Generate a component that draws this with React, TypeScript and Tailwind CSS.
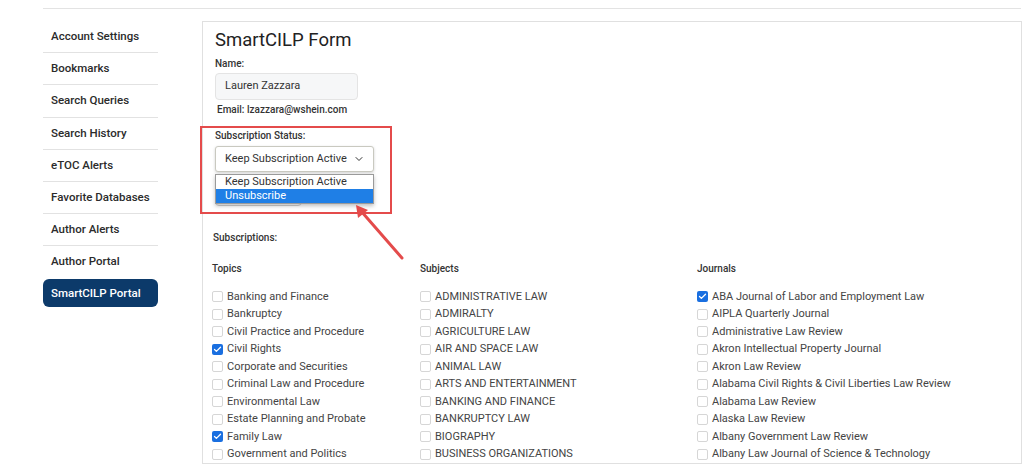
import { ChevronDown, Check } from 'lucide-react'

const navItems = [
  'Account Settings',
  'Bookmarks',
  'Search Queries',
  'Search History',
  'eTOC Alerts',
  'Favorite Databases',
  'Author Alerts',
  'Author Portal',
]

const topics = [
  { name: 'Banking and Finance' },
  { name: 'Bankruptcy' },
  { name: 'Civil Practice and Procedure' },
  { name: 'Civil Rights', checked: true },
  { name: 'Corporate and Securities' },
  { name: 'Criminal Law and Procedure' },
  { name: 'Environmental Law' },
  { name: 'Estate Planning and Probate' },
  { name: 'Family Law', checked: true },
  { name: 'Government and Politics' },
]

const subjects = [
  { name: 'ADMINISTRATIVE LAW' },
  { name: 'ADMIRALTY' },
  { name: 'AGRICULTURE LAW' },
  { name: 'AIR AND SPACE LAW' },
  { name: 'ANIMAL LAW' },
  { name: 'ARTS AND ENTERTAINMENT' },
  { name: 'BANKING AND FINANCE' },
  { name: 'BANKRUPTCY LAW' },
  { name: 'BIOGRAPHY' },
  { name: 'BUSINESS ORGANIZATIONS' },
]

const journals = [
  { name: 'ABA Journal of Labor and Employment Law', checked: true },
  { name: 'AIPLA Quarterly Journal' },
  { name: 'Administrative Law Review' },
  { name: 'Akron Intellectual Property Journal' },
  { name: 'Akron Law Review' },
  { name: 'Alabama Civil Rights & Civil Liberties Law Review' },
  { name: 'Alabama Law Review' },
  { name: 'Alaska Law Review' },
  { name: 'Albany Government Law Review' },
  { name: 'Albany Law Journal of Science & Technology' },
]

type Item = { name: string; checked?: boolean }

function CheckRow({ item }: { item: Item }) {
  return (
    <div className="flex items-center h-[17.5px] gap-[4px]">
      {item.checked ? (
        <span className="w-[11px] h-[11px] rounded-[2px] bg-[#1a6fe0] flex items-center justify-center shrink-0">
          <Check className="w-[9px] h-[9px] text-white" strokeWidth={3.5} />
        </span>
      ) : (
        <span className="w-[11px] h-[11px] rounded-[2px] border border-[#d6d6d6] bg-white shrink-0" />
      )}
      <span className="text-[11px] text-[#444] whitespace-nowrap">{item.name}</span>
    </div>
  )
}

function Column({ title, items, width }: { title: string; items: Item[]; width: string }) {
  return (
    <div className={width}>
      <div className="text-[10px] leading-[14px] font-medium text-[#333]">{title}</div>
      <div className="mt-[12px]">
        {items.map((it) => (
          <CheckRow key={it.name} item={it} />
        ))}
      </div>
    </div>
  )
}

export default function App() {
  return (
    <div className="w-[1024px] h-[466px] overflow-hidden bg-white relative font-['Roboto',sans-serif] text-[#333]">
      <div className="ml-[43px] mr-[3px] mt-[8px] border-t border-[#e3e3e3]" />
      <div className="flex pl-[43px]">
        {/* sidebar */}
        <nav className="w-[115px] mt-[12px] shrink-0">
          {navItems.map((n, i) => (
            <div
              key={n}
              className={`flex items-center pl-[8px] text-[11.5px] font-medium text-[#2b2b2b] ${i < navItems.length - 1 ? 'h-[32.2px] border-b border-[#e2e2e2]' : 'h-[30px]'}`}
            >
              {n}
            </div>
          ))}
          <div className="mt-[3px] h-[28px] rounded-[6px] bg-[#0c3a6a] flex items-center pl-[8px] text-[11.5px] font-medium text-white">
            SmartCILP Portal
          </div>
        </nav>

        {/* main panel */}
        <main className="ml-[44px] mr-[2px] mt-[12px] h-[443px] flex-1 border border-[#e0e0e0] pl-[12px] pt-[7px]">
          <h1 className="text-[18.5px] leading-[22px] text-[#222]">SmartCILP Form</h1>
          <div className="mt-[6px] text-[10px] leading-[14px] font-medium">Name:</div>
          <div className="mt-[2px] w-[143px] h-[27px] rounded-[4px] border border-[#e4e4e4] bg-[#f6f7f8] flex items-center pl-[9px] text-[11px] text-[#333]">
            Lauren Zazzara
          </div>
          <div className="mt-[3px] ml-[2px] text-[10px] leading-[14px] font-medium">Email: lzazzara@wshein.com</div>

          <div className="relative">
            <div className="mt-[12px] text-[10px] leading-[14px] font-medium">Subscription Status:</div>
            <div className="mt-[3px] w-[159px] h-[26px] rounded-[3px] border border-[#c9c9c0] bg-white shadow-[0_1px_3px_rgba(0,0,0,0.18)] flex items-center justify-between pl-[9px] pr-[8px] text-[11px] text-[#333]">
              <span>Keep Subscription Active</span>
              <ChevronDown className="w-[12px] h-[12px] text-[#333]" strokeWidth={2} />
            </div>
            <button className="mt-[6px] w-[87px] h-[28px] rounded-[4px] border border-[#cfcfcf] bg-white" />

            {/* open select menu */}
            <div className="absolute left-0 top-[45px] w-[159px] border border-[#9a9a9a] bg-white shadow-[0_2px_4px_rgba(0,0,0,0.25)] text-[11px]">
              <div className="h-[14px] leading-[14px] pl-[9px] text-[#333]">Keep Subscription Active</div>
              <div className="h-[14px] leading-[14px] pl-[9px] bg-[#1f7fe6] text-white">Unsubscribe</div>
            </div>
          </div>

          <div className="-ml-[2px]">
            <div className="mt-[19px] text-[10px] leading-[14px] font-medium">Subscriptions:</div>
            <div className="mt-[17px] flex -ml-[1px]">
              <Column title="Topics" items={topics} width="w-[208px]" />
              <Column title="Subjects" items={subjects} width="w-[277px]" />
              <Column title="Journals" items={journals} width="flex-1" />
            </div>
          </div>
        </main>
      </div>

      {/* annotation: red box and arrow */}
      <div className="absolute left-[200px] top-[126px] w-[192px] h-[88px] border-2 border-[#e44b4b] pointer-events-none" />
      <svg className="absolute left-0 top-0 pointer-events-none" width="1024" height="466">
        <line x1="402" y1="258" x2="361" y2="211" stroke="#e44b4b" strokeWidth="3" strokeLinecap="round" />
        <polygon points="356,205 358,218 368,210" fill="#e44b4b" />
      </svg>
    </div>
  )
}
